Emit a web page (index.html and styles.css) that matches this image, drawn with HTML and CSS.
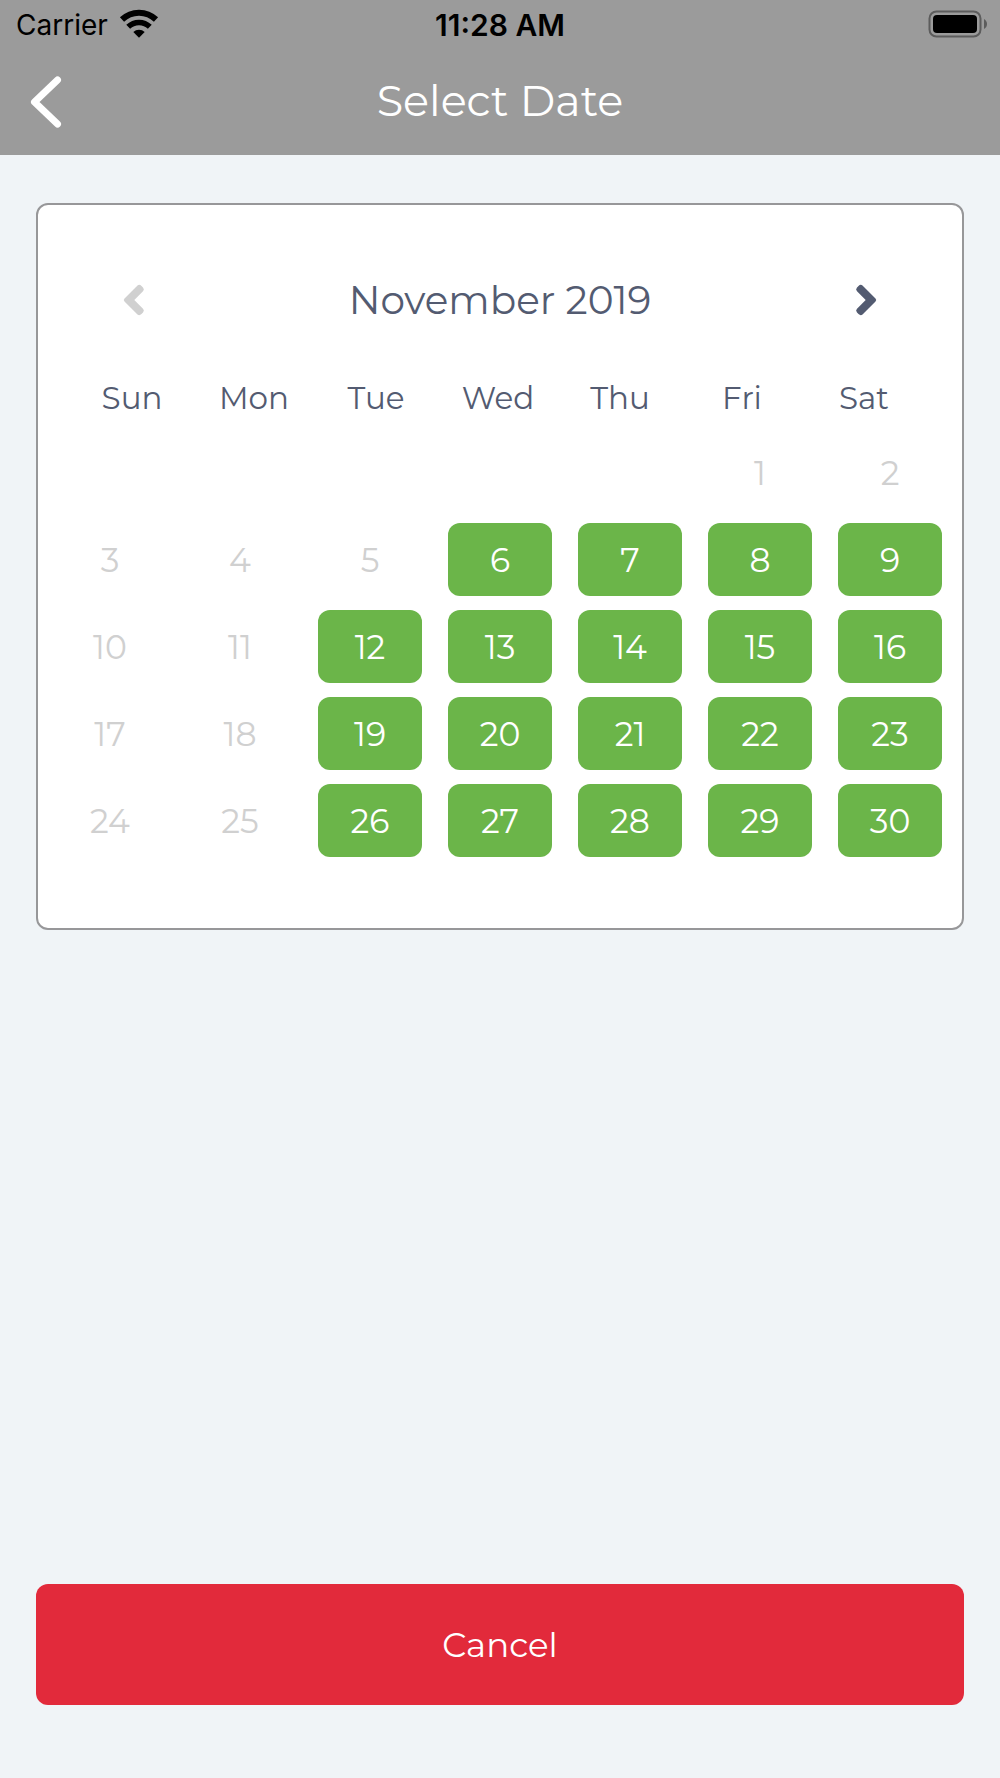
FILE: index.html
```html
<!DOCTYPE html>
<html lang="en">
<head>
<meta charset="utf-8">
<meta name="viewport" content="width=device-width, initial-scale=1">
<title>Select Date</title>
<link rel="stylesheet" href="styles.css">
</head>
<body>
<header class="top">
  <div class="status">
    <div class="carrier">
      <span>Carrier</span>
      <svg width="38" height="28" viewBox="0 0 38 28" aria-hidden="true">
        <path d="M2 8.500A24.500 24.500 0 0 1 36 8.500" fill="none" stroke="#000" stroke-width="6"/>
        <path d="M8.200 15.800A15.500 15.500 0 0 1 29.800 15.800" fill="none" stroke="#000" stroke-width="5.500"/>
        <path d="M13.300 21A8.200 8.200 0 0 1 24.700 21L19 26.800Z" fill="#000"/>
      </svg>
    </div>
    <time class="clock">11:28 AM</time>
    <svg class="battery" width="60" height="28" viewBox="0 0 60 28" aria-hidden="true">
      <rect x="1.500" y="0.500" width="51" height="25" rx="7" fill="none" stroke="#5c5c5c" stroke-width="2"/>
      <rect x="5" y="4" width="44" height="18" rx="4" fill="#000"/>
      <path d="M56 8C60 10 60 16 56 18Z" fill="#5c5c5c"/>
    </svg>
  </div>
  <div class="bar">
    <button class="back" type="button" aria-label="Back">
      <svg width="32" height="54" viewBox="0 0 32 54" aria-hidden="true">
        <path d="M27.500 6L4.500 28L27.500 50" fill="none" stroke="#fff" stroke-width="7" stroke-linecap="round" stroke-linejoin="round"/>
      </svg>
    </button>
    <h1 class="title">Select Date</h1>
  </div>
</header>
<main class="content">
  <section class="calendar" aria-label="Calendar">
    <div class="month">
      <button class="arrow" type="button" aria-label="Previous month" disabled>
        <svg width="22" height="32" viewBox="0 0 22 32" aria-hidden="true">
          <path d="M14.500 1.500Q16.500 0 18.500 2L20 3.500Q21.800 5.500 20 7.300L11.300 16L20 24.700Q21.800 26.500 20 28.500L18.500 30Q16.500 32 14.500 30.500L1.500 17.500Q0 16 1.500 14.500Z" fill="currentColor"/>
        </svg>
      </button>
      <h2 class="month-name">November 2019</h2>
      <button class="arrow" type="button" aria-label="Next month">
        <svg width="22" height="32" viewBox="0 0 22 32" aria-hidden="true">
          <path d="M7.500 1.500Q5.500 0 3.500 2L2 3.500Q.200 5.500 2 7.300L10.700 16L2 24.700Q.200 26.500 2 28.500L3.500 30Q5.500 32 7.500 30.500L20.500 17.500Q22 16 20.500 14.500Z" fill="currentColor"/>
        </svg>
      </button>
    </div>
    <table class="grid">
      <thead>
        <tr class="weekdays"><th scope="col">Sun</th><th scope="col">Mon</th><th scope="col">Tue</th><th scope="col">Wed</th><th scope="col">Thu</th><th scope="col">Fri</th><th scope="col">Sat</th></tr>
      </thead>
      <tbody class="weeks">
        <tr class="week"><td></td><td></td><td></td><td></td><td></td><td><button class="day" type="button" disabled>1</button></td><td><button class="day" type="button" disabled>2</button></td></tr>
        <tr class="week"><td><button class="day" type="button" disabled>3</button></td><td><button class="day" type="button" disabled>4</button></td><td><button class="day" type="button" disabled>5</button></td><td><button class="day" type="button">6</button></td><td><button class="day" type="button">7</button></td><td><button class="day" type="button">8</button></td><td><button class="day" type="button">9</button></td></tr>
        <tr class="week"><td><button class="day" type="button" disabled>10</button></td><td><button class="day" type="button" disabled>11</button></td><td><button class="day" type="button">12</button></td><td><button class="day" type="button">13</button></td><td><button class="day" type="button">14</button></td><td><button class="day" type="button">15</button></td><td><button class="day" type="button">16</button></td></tr>
        <tr class="week"><td><button class="day" type="button" disabled>17</button></td><td><button class="day" type="button" disabled>18</button></td><td><button class="day" type="button">19</button></td><td><button class="day" type="button">20</button></td><td><button class="day" type="button">21</button></td><td><button class="day" type="button">22</button></td><td><button class="day" type="button">23</button></td></tr>
        <tr class="week"><td><button class="day" type="button" disabled>24</button></td><td><button class="day" type="button" disabled>25</button></td><td><button class="day" type="button">26</button></td><td><button class="day" type="button">27</button></td><td><button class="day" type="button">28</button></td><td><button class="day" type="button">29</button></td><td><button class="day" type="button">30</button></td></tr>
      </tbody>
    </table>
  </section>
  <button class="cancel" type="button">Cancel</button>
</main>
</body>
</html>
```
FILE: styles.css
```css
* {
  box-sizing: border-box;
}

body {
  margin: 0;
  min-height: 100vh;
  display: flex;
  flex-direction: column;
  background: #f0f4f7;
  color: #535b71;
  font-family: Montserrat, Inter, sans-serif;
  font-weight: 400;
}

button {
  padding: 0;
  border: 0;
  background: none;
  color: inherit;
  font: inherit;
}

svg {
  display: block;
  overflow: visible;
}

.top {
  background: #9b9b9b;
}

.status {
  display: grid;
  grid-template-columns: 1fr auto 1fr;
  align-items: center;
  height: 50px;
  padding: 0 12px;
  color: #000;
  font-family: Inter, sans-serif;
  font-size: 28px;
}

.carrier {
  display: flex;
  align-items: center;
  gap: 12px;
  padding-left: 4px;
}

.clock {
  font-size: 30px;
  font-weight: 600;
}

.battery {
  justify-self: end;
}

.bar {
  display: grid;
  grid-template-columns: 60px 1fr 60px;
  align-items: center;
  height: 105px;
  padding: 0 16px 4px;
  color: #fff;
}

.back {
  display: flex;
  align-items: center;
  justify-content: center;
  height: 60px;
}

.title {
  margin: 0;
  font-size: 43px;
  font-weight: 400;
  line-height: 50px;
  text-align: center;
}

.content {
  flex: 1;
  display: flex;
  flex-direction: column;
  justify-content: space-between;
  gap: 48px;
  padding: 48px 36px 73px;
}

.calendar {
  padding: 65px 20px 71px;
  border: 2px solid #979799;
  border-radius: 12px;
  background: #fff;
}

.month {
  display: flex;
  align-items: center;
  justify-content: space-between;
  height: 60px;
  margin-bottom: 48px;
  padding: 0 46px;
}

.month-name {
  margin: 0;
  font-size: 39px;
  font-weight: 400;
  line-height: 50px;
}

.arrow {
  display: flex;
  align-items: center;
  justify-content: center;
  width: 60px;
  height: 60px;
}

.arrow:disabled {
  color: #d0d0d0;
}

.grid,
.grid thead {
  display: block;
}

.weekdays {
  display: grid;
  grid-template-columns: repeat(7, 1fr);
  height: 40px;
  margin-bottom: 18px;
  padding: 0 17px 0 13px;
  font-size: 31px;
  line-height: 40px;
}

.weekdays th {
  padding: 0;
  font-weight: 400;
}

.weeks {
  display: grid;
  gap: 14px;
}

.week {
  display: grid;
  grid-template-columns: repeat(7, 1fr);
  column-gap: 26px;
  height: 73px;
}

.week td {
  padding: 0;
}

.day {
  width: 100%;
  height: 73px;
  border-radius: 12px;
  background: #6bb549;
  color: #fff;
  font-size: 33px;
}

.day:disabled {
  background: none;
  color: #d0d0d0;
}

.cancel {
  height: 121px;
  border-radius: 12px;
  background: #e22a3b;
  color: #fff;
  font-size: 34px;
}
```
